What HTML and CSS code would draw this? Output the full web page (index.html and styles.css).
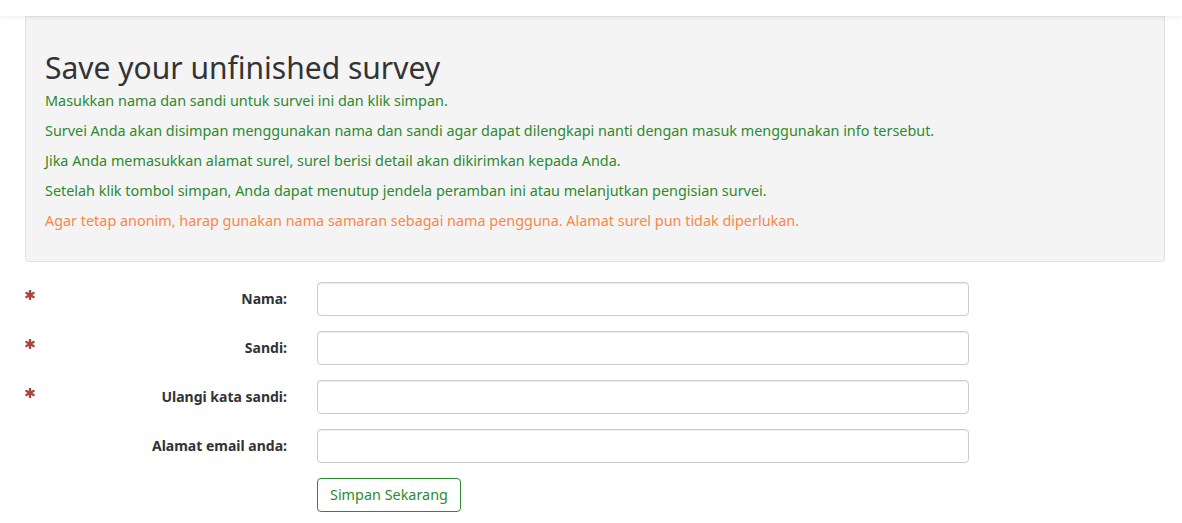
FILE: index.html
```html
<!DOCTYPE html>
<html lang="id">
<head>
<meta charset="utf-8">
<title>Save your unfinished survey</title>
<link rel="stylesheet" href="styles.css">
</head>
<body>
<header class="topbar"></header>
<main class="page">
  <section class="well">
    <h1 class="title">Save your unfinished survey</h1>
    <p class="info">Masukkan nama dan sandi untuk survei ini dan klik simpan.</p>
    <p class="info">Survei Anda akan disimpan menggunakan nama dan sandi agar dapat dilengkapi nanti dengan masuk menggunakan info tersebut.</p>
    <p class="info">Jika Anda memasukkan alamat surel, surel berisi detail akan dikirimkan kepada Anda.</p>
    <p class="info">Setelah klik tombol simpan, Anda dapat menutup jendela peramban ini atau melanjutkan pengisian survei.</p>
    <p class="warn">Agar tetap anonim, harap gunakan nama samaran sebagai nama pengguna. Alamat surel pun tidak diperlukan.</p>
  </section>
  <form class="form">
    <div class="row">
      <span class="req"><svg class="star" viewBox="0 0 10 10" aria-hidden="true"><g stroke="currentColor" stroke-width="2.4" stroke-linecap="round"><line x1="5" y1="0.9" x2="5" y2="9.1"/><line x1="1.45" y1="2.95" x2="8.55" y2="7.05"/><line x1="1.45" y1="7.05" x2="8.55" y2="2.95"/></g></svg></span>
      <label class="label" for="nama">Nama:</label>
      <input class="input" id="nama" type="text">
    </div>
    <div class="row">
      <span class="req"><svg class="star" viewBox="0 0 10 10" aria-hidden="true"><g stroke="currentColor" stroke-width="2.4" stroke-linecap="round"><line x1="5" y1="0.9" x2="5" y2="9.1"/><line x1="1.45" y1="2.95" x2="8.55" y2="7.05"/><line x1="1.45" y1="7.05" x2="8.55" y2="2.95"/></g></svg></span>
      <label class="label" for="sandi">Sandi:</label>
      <input class="input" id="sandi" type="password">
    </div>
    <div class="row">
      <span class="req"><svg class="star" viewBox="0 0 10 10" aria-hidden="true"><g stroke="currentColor" stroke-width="2.4" stroke-linecap="round"><line x1="5" y1="0.9" x2="5" y2="9.1"/><line x1="1.45" y1="2.95" x2="8.55" y2="7.05"/><line x1="1.45" y1="7.05" x2="8.55" y2="2.95"/></g></svg></span>
      <label class="label" for="ulang">Ulangi kata sandi:</label>
      <input class="input" id="ulang" type="password">
    </div>
    <div class="row">
      <span class="req"></span>
      <label class="label" for="email">Alamat email anda:</label>
      <input class="input" id="email" type="email">
    </div>
    <div class="row">
      <span class="req"></span>
      <span class="label"></span>
      <div><button class="btn" type="button">Simpan Sekarang</button></div>
    </div>
  </form>
</main>
</body>
</html>
```

FILE: styles.css
```css
* { box-sizing: border-box; }
html, body { margin: 0; padding: 0; background: #fff; }
body {
  font-family: "Noto Sans", "Open Sans", sans-serif;
  font-size: 14px;
  line-height: 20px;
  color: #333;
}
.topbar {
  height: 16px;
  background: #fff;
  box-shadow: 0 1px 6px rgba(0,0,0,0.08);
  position: relative;
  z-index: 1;
}
.page {
  margin-left: 25px;
  width: 1140px;
}
.well {
  background: #f4f4f4;
  border: 1px solid #e3e3e3;
  border-top: 0;
  border-radius: 0 0 4px 4px;
  padding: 34px 19px 20px;
  box-shadow: inset 0 1px 1px rgba(0,0,0,0.05);
}
.title {
  margin: 0 0 5px;
  font-size: 30px;
  line-height: 36px;
  font-weight: 400;
  color: #333;
}
.info, .warn {
  margin: 0 0 10px;
  font-size: 14.4px;
}
.info { color: #2d8a2f; }
.warn { color: #f7884a; }
.form {
  padding-top: 20px;
}
.row {
  display: grid;
  grid-template-columns: 20px 272px 652px;
  column-gap: 0;
  align-items: start;
  margin-bottom: 15px;
}
.req {
  color: #a94442;
  height: 34px;
  padding-top: 8px;
}
.star {
  display: block;
  width: 10px;
  height: 10px;
}
.label {
  text-align: right;
  font-weight: 700;
  padding-top: 7px;
  margin-right: 30px;
}
.input {
  width: 652px;
  height: 34px;
  border: 1px solid #ccc;
  border-radius: 4px;
  background: #fff;
  box-shadow: inset 0 1px 1px rgba(0,0,0,0.075);
  font: inherit;
  padding: 6px 12px;
}
.btn {
  height: 34px;
  padding: 6px 12px;
  border: 1px solid #2d8a2f;
  border-radius: 4px;
  background: #fff;
  color: #2d8a2f;
  font: inherit;
  font-size: 14.4px;
}
```
